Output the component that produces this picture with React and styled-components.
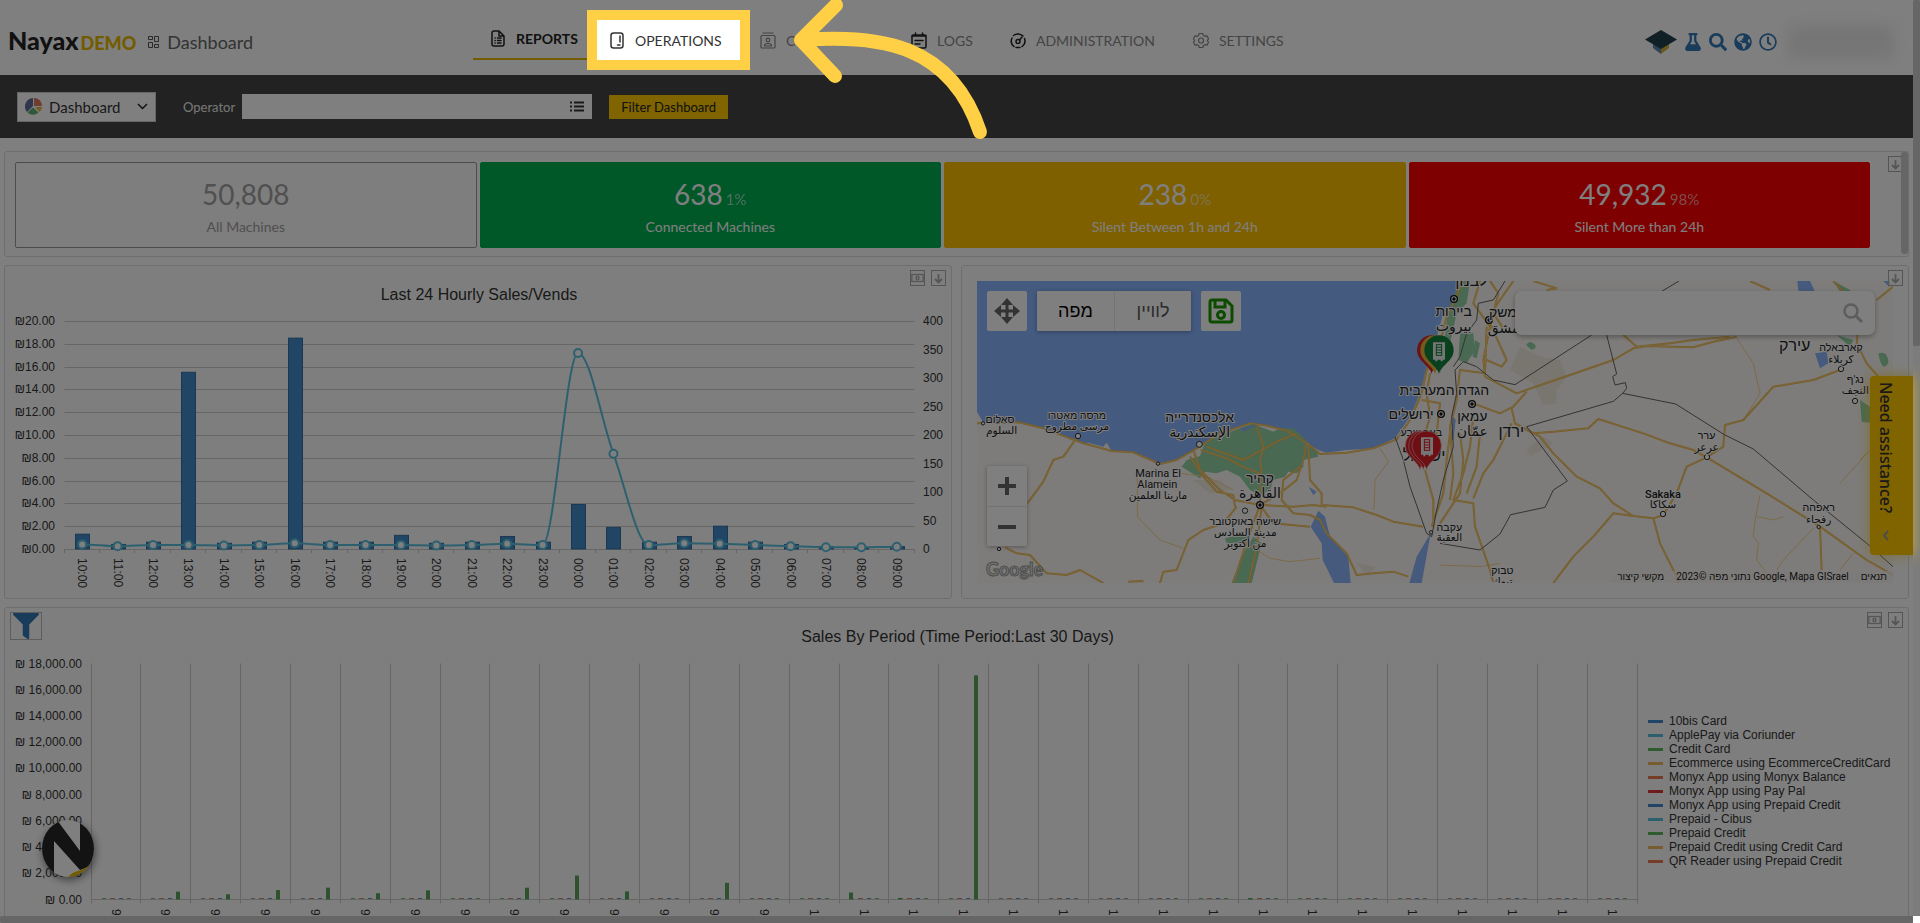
import React from 'react'
import styled, { createGlobalStyle, css } from 'styled-components'
import { FaFlask, FaSearch, FaGlobeAmericas, FaRegClock, FaFilter } from 'react-icons/fa'

const GlobalStyle = createGlobalStyle`
    * {
        box-sizing: border-box;
    }
    body {
        margin: 0;
        overflow: hidden;
        background: #fff;
        font-family: Lato, "Open Sans", sans-serif;
    }
    button, input, select {
        font-family: inherit;
    }
`

const Shell = styled.div`
    position: relative;
    display: grid;
    grid-template-columns: minmax(0, 1fr) 7px;
    grid-template-rows: minmax(0, 1fr) 7px;
    height: 100vh;
    overflow: hidden;
`

const Page = styled.div`
    overflow: hidden;
`

const Track = styled.div`
    background: #7c7c7c;
`

const Thumb = styled.div`
    height: ${({ $h }) => $h};
    width: ${({ $w }) => $w};
    background: #666;
    border-radius: 2px;
`

/* ---------- header ---------- */

const Header = styled.header`
    display: grid;
    grid-template-columns: 473px auto 1fr;
    height: 75px;
`

const Brand = styled.div`
    display: flex;
    align-items: center;
    padding: 8px 0 0 8px;
`

const Logo = styled.a`
    font-size: 25px;
    line-height: 26px;
    font-weight: 900;
    color: #222;
    text-decoration: none;
`

const LogoTag = styled.span`
    color: #e6b800;
    font-size: 18px;
    margin-left: 2px;
`

const PageTitle = styled.h1`
    display: flex;
    align-items: center;
    gap: 8px;
    margin: 0 0 0 12px;
    font-size: 18px;
    font-weight: 400;
    color: #666;
`

const Nav = styled.nav`
    display: flex;
    height: 60px;
`

const NavItem = styled.a`
    position: relative;
    display: flex;
    align-items: center;
    gap: 10px;
    padding: 20px 18px 0 15px;
    font-size: 14px;
    color: #888;
    text-decoration: none;
    white-space: nowrap;
    & > svg:first-child {
        color: ${({ $darkIcon }) => ($darkIcon ? '#222' : 'inherit')};
    }
    ${({ $active }) => $active && css`
        padding: 18px 16px 0 17px;
        border-bottom: 2px solid #e6b800;
        color: #222;
        font-weight: 700;
    `}
    ${({ $dark }) => $dark && css`
        color: #333;
    `}
`

const NavLabel = styled.span`
    min-width: ${({ $w }) => $w}px;
`

const Utilities = styled.div`
    display: flex;
    align-items: center;
    justify-content: flex-end;
    gap: 7px;
    padding: 9px 19px 0 0;
    color: #3379b7;
    font-size: 18px;
`

const Account = styled.div`
    width: 106px;
    height: 34px;
    margin-left: 4px;
    background: #eaeaea;
    filter: blur(8px);
`

/* ---------- guided tour ---------- */

const Spotlight = styled.span`
    position: absolute;
    z-index: 50;
    top: 10px;
    left: -7px;
    right: -5px;
    height: 60px;
    border: 10px solid #ffd045;
    box-shadow: 0 0 0 4000px rgba(0, 0, 0, 0.5);
    pointer-events: none;
`

const TourArrow = styled.svg`
    position: absolute;
    z-index: 51;
    top: 0;
    left: 185px;
    pointer-events: none;
`

/* ---------- filter bar ---------- */

const FilterBar = styled.form`
    display: flex;
    align-items: center;
    height: 63px;
    padding: 0 17px 0 17px;
    background: #444;
`

const ViewPicker = styled.div`
    display: flex;
    align-items: center;
    width: 139px;
    height: 30px;
    padding: 0 7px;
    border: 1px solid #ccc;
    background: #fff;
`

const ViewSelect = styled.select`
    flex: 1;
    min-width: 0;
    padding: 0 0 0 7px;
    border: 0;
    appearance: none;
    background: transparent;
    font-size: 15px;
    color: #333;
`

const OperatorLabel = styled.label`
    margin: 0 7px 0 27px;
    font-size: 13px;
    color: #eee;
`

const OperatorBox = styled.div`
    display: flex;
    align-items: center;
    width: 350px;
    height: 25px;
    padding-right: 8px;
    background: #fff;
`

const OperatorInput = styled.input`
    flex: 1;
    border: 0;
    outline: 0;
    background: transparent;
`

const FilterButton = styled.button`
    height: 24px;
    width: 119px;
    margin-left: 17px;
    padding: 0;
    border: 0;
    background: #ffc800;
    font-size: 13px;
    color: #222;
`

/* ---------- panels ---------- */

const Board = styled.main`
    display: flex;
    flex-direction: column;
    gap: 8px;
    padding: 13px 4px 0;
`

const Row = styled.div`
    display: grid;
    grid-template-columns: 1fr 1fr;
    gap: 9px;
`

const Panel = styled.section`
    position: relative;
    border: 1px solid #ddd;
    border-radius: 3px;
    background: #fdfdfd;
`

const StatPanel = styled(Panel)`
    height: 106px;
    padding: 10px 38px 9px 10px;
`

const StatGrid = styled.div`
    display: grid;
    grid-template-columns: repeat(4, 1fr);
    gap: 3px;
    height: 86px;
`

const Stat = styled.div`
    display: flex;
    flex-direction: column;
    align-items: center;
    padding-top: 13px;
    border: 1px solid ${({ $bg }) => $bg || '#999'};
    border-radius: 2px;
    background: ${({ $bg }) => $bg || 'transparent'};
    color: ${({ $bg }) => ($bg ? '#fff' : '#a0a0a0')};
`

const StatValue = styled.div`
    display: flex;
    align-items: baseline;
    gap: 3px;
    height: 36px;
    font-size: 28px;
    line-height: 36px;
`

const StatShare = styled.span`
    font-size: 15px;
    opacity: 0.6;
`

const StatName = styled.div`
    font-size: 14px;
    line-height: 30px;
`

const PanelScroll = styled.div`
    position: absolute;
    top: 0;
    right: 0;
    width: 7px;
    height: 102px;
    border-radius: 3px;
    background: #ccc;
`

const Tools = styled.div`
    position: absolute;
    top: 4px;
    right: 5px;
    display: flex;
    gap: 6px;
`

const ToolButton = styled.button`
    display: flex;
    align-items: center;
    justify-content: center;
    width: 15px;
    height: 16px;
    padding: 0;
    border: 1px solid #aaa;
    background: transparent;
    color: #aaa;
`

const FunnelButton = styled.button`
    position: absolute;
    top: 4px;
    left: 5px;
    display: flex;
    align-items: center;
    justify-content: center;
    width: 32px;
    height: 28px;
    padding: 0;
    border: 1px solid #bbb;
    background: transparent;
    color: #3379b7;
    font-size: 26px;
`

const ChartTitle = styled.h2`
    height: 46px;
    margin: 0;
    padding: 19px 0 0 2px;
    font-family: "Liberation Sans", Arial, sans-serif;
    font-size: 16px;
    line-height: 20px;
    font-weight: 400;
    text-align: center;
    color: #333;
`

const Chart = styled.svg`
    display: block;
    flex: 1;
    width: 100%;
    min-width: 0;
    height: auto;
    font-family: "Liberation Sans", Arial, sans-serif;
    font-size: 12px;
    fill: #333;
`

const ChartBody = styled.div`
    display: flex;
    align-items: flex-start;
`

const Legend = styled.ul`
    flex: none;
    width: 266px;
    margin: 0;
    padding: 60px 0 0 6px;
    list-style: none;
    font-family: "Liberation Sans", Arial, sans-serif;
    font-size: 12px;
    line-height: 14px;
    color: #333;
`

const LegendItem = styled.li`
    display: flex;
    align-items: center;
    gap: 6px;
    white-space: nowrap;
    &::before {
        content: '';
        width: 15px;
        height: 3px;
        background: ${({ $color }) => $color};
    }
`

/* ---------- map ---------- */

const MapPanel = styled(Panel)`
    padding: 15px;
`

const MapFrame = styled.div`
    position: relative;
    height: 302px;
    overflow: hidden;
    font-family: Roboto, "Liberation Sans", "DejaVu Sans", sans-serif;
`

const MapSvg = styled.svg`
    display: block;
    width: 100%;
    height: 100%;
`

const MapTop = styled.div`
    position: absolute;
    top: 10px;
    left: 10px;
    right: 18px;
    display: flex;
    align-items: flex-start;
    gap: 10px;
`

const MapButton = styled.button`
    display: flex;
    align-items: center;
    justify-content: center;
    width: ${({ $wide }) => ($wide ? 77 : 40)}px;
    height: 40px;
    padding: 0;
    border: 0;
    border-radius: 2px;
    background: #fff;
    font-size: 18px;
    color: ${({ $on }) => ($on ? '#000' : '#565656')};
`

const MapTypes = styled.div`
    display: flex;
    border-radius: 2px;
    background: #fff;
    box-shadow: 0 1px 4px rgba(0, 0, 0, 0.3);
    & > * + * {
        border-left: 1px solid #e6e6e6;
    }
`

const MapSearch = styled.label`
    display: flex;
    align-items: center;
    width: 360px;
    height: 44px;
    margin-left: auto;
    padding: 0 12px;
    border-radius: 7px;
    background: #fff;
    box-shadow: 0 2px 5px rgba(0, 0, 0, 0.3);
`

const ZoomBox = styled.div`
    position: absolute;
    left: 10px;
    top: 185px;
    border-radius: 2px;
    background: #fff;
    box-shadow: 0 1px 4px rgba(0, 0, 0, 0.3);
    & > * + * {
        border-top: 1px solid #e6e6e6;
    }
`

const MapLogo = styled.div`
    position: absolute;
    left: 9px;
    bottom: 3px;
    font-family: Lato, sans-serif;
    font-size: 18px;
    line-height: 22px;
    font-weight: 700;
    color: #eee;
    -webkit-text-stroke: 1px #999;
`

const MapCredits = styled.div`
    position: absolute;
    right: 0;
    bottom: 0;
    display: flex;
    gap: 12px;
    padding: 0 6px;
    font-size: 10px;
    line-height: 12px;
    color: #222;
    background: rgba(250, 247, 242, 0.7);
`

const CreditLink = styled.a`
    color: inherit;
    text-decoration: none;
`

const Assist = styled.button`
    position: absolute;
    top: 376px;
    right: 7px;
    display: flex;
    align-items: center;
    justify-content: space-between;
    width: 43px;
    height: 179px;
    padding: 6px 12px 14px 0;
    border: 0;
    border-radius: 4px 0 0 4px;
    background: #ffc800;
    box-shadow: 0 0 14px rgba(255, 200, 0, 0.6);
    font-family: "Noto Sans", sans-serif;
    font-size: 16px;
    line-height: 18px;
    font-weight: 500;
    color: #333;
    writing-mode: vertical-rl;
    white-space: nowrap;
`

const ChatBadge = styled.button`
    position: absolute;
    left: 42px;
    top: 820px;
    width: 54px;
    height: 58px;
    padding: 0;
    border: 0;
    background: transparent;
    filter: drop-shadow(1px 3px 4px rgba(0, 0, 0, 0.5));
`

const line = { fill: 'none', stroke: 'currentColor', strokeWidth: 1.5, strokeLinecap: 'round', strokeLinejoin: 'round' }

const icons = {
  reports: (
    <g {...line}>
      <path d="M2 3q0-2 2-2h5l5 5v8q0 2-2 2H4q-2 0-2-2zM9 1v5h5" />
      <path d="M5 8h.2M7.500 8H11M5 10.500h.2M7.500 10.500H11M5 13h.2M7.500 13H11" />
    </g>
  ),
  operations: (
    <g {...line}>
      <rect x="2" y="1" width="12" height="15" rx="2.500" />
      <path d="M11 4v6M8.500 13h2.500" />
    </g>
  ),
  customers: (
    <g {...line} strokeWidth="1.200">
      <path d="M3 1h10M2 3.500h12q1 0 1 1V15q0 1-1 1H2q-1 0-1-1V4.500q0-1 1-1z" />
      <circle cx="8" cy="8" r="1.800" />
      <path d="M4.500 14q0-2.500 3.500-2.500T11.500 14z" />
    </g>
  ),
  logs: (
    <g {...line}>
      <rect x="1" y="3" width="14" height="13" rx="1.500" />
      <path d="M4.500 1v3M11.500 1v3M1 4h14M4 8.500h8M4 12h5" />
    </g>
  ),
  admin: (
    <g {...line}>
      <path d="M4 14.500A7 7 0 0 1 2 6M3.500 3.500A7 7 0 0 1 13 4M14.500 6.500A7 7 0 0 1 12 14.500M6 15.500h4" />
      <circle cx="8" cy="9.500" r="2" />
      <path d="M9.500 8L12 5" />
    </g>
  ),
  settings: (
    <g {...line} strokeWidth="1.200">
      <path d="M6.200 1.500h3.600l.6 2 1.600.8 2-.5 1.500 3-1.200 1.700 1.200 1.700-1.500 3-2-.5-1.600.8-.6 2H6.200l-.6-2-1.600-.8-2 .5-1.500-3 1.200-1.700L.5 6.800l1.500-3 2 .5 1.600-.8z" />
      <circle cx="8" cy="8.500" r="2.500" />
    </g>
  ),
}

function NavIcon({ name }) {
  return <svg width="16" height="17" viewBox="0 0 16 17">{icons[name]}</svg>
}

function DownloadTool() {
  return (
    <ToolButton type="button" aria-label="Download">
      <svg width="9" height="11" viewBox="0 0 9 11"><path d="M4.500 1v8M1 6l3.500 3.500L8 6" fill="none" stroke="currentColor" strokeWidth="1.800" /></svg>
    </ToolButton>
  )
}

function CashTool() {
  return (
    <ToolButton type="button" aria-label="Currency">
      <svg width="15" height="10" viewBox="0 0 15 10">
        <rect x="1" y="1" width="13" height="8" fill="none" stroke="currentColor" strokeWidth="1.500" />
        <ellipse cx="7.500" cy="5" rx="2.500" ry="2.800" fill="currentColor" />
        <path d="M7.500 3.500v3" stroke="#fff" />
      </svg>
    </ToolButton>
  )
}

/* ---------- hourly chart ---------- */

const hours = ['10', '11', '12', '13', '14', '15', '16', '17', '18', '19', '20', '21', '22', '23', '00', '01', '02', '03', '04', '05', '06', '07', '08', '09']
const sales = [1.3, 0.4, 0.6, 15.5, 0.5, 0.6, 18.5, 0.6, 0.6, 1.2, 0.5, 0.6, 1.1, 0.6, 3.9, 1.9, 0.6, 1.1, 2, 0.6, 0.4, 0.2, 0.1, 0.2]
const vends = [8, 5, 7, 7, 6, 7, 10, 7, 7, 7, 6, 7, 9, 7, 344, 167, 7, 10, 9, 7, 5, 3, 3, 4]

// monotone cubic through the points, so peaks stay flat on top
function smoothPath(pts) {
  const slope = (i) => (pts[i + 1][1] - pts[i][1]) / (pts[i + 1][0] - pts[i][0])
  const tan = pts.map((p, i) => {
    if (i === 0 || i === pts.length - 1) return 0
    const a = slope(i - 1)
    const b = slope(i)
    return a * b <= 0 ? 0 : (a + b) / 2
  })
  let d = `M${pts[0][0]} ${pts[0][1]}`
  for (let i = 0; i < pts.length - 1; i++) {
    const h = (pts[i + 1][0] - pts[i][0]) / 3
    d += `C${pts[i][0] + h} ${pts[i][1] + tan[i] * h} ${pts[i + 1][0] - h} ${pts[i + 1][1] - tan[i + 1] * h} ${pts[i + 1][0]} ${pts[i + 1][1]}`
  }
  return d
}

function HourlyChart() {
  const left = 59.5
  const right = 909.5
  const base = 237
  const height = 228
  const step = (right - left) / hours.length
  const pts = vends.map((v, i) => [left + (i + 0.5) * step, base - (v / 400) * height])
  return (
    <Chart viewBox="0 0 946 285">
      {Array.from({ length: 11 }, (_, i) => {
        const y = Math.round(base - (i * height) / 10) + 0.5
        return (
          <g key={i}>
            <path d={`M${left} ${y}H${right}`} stroke="#ccc" />
            <text x="50" y={y + 3} textAnchor="end">{`₪${i * 2}.00`}</text>
          </g>
        )
      })}
      {Array.from({ length: 9 }, (_, i) => (
        <text key={i} x="918" y={base - (i * height) / 8 + 4}>{i * 50}</text>
      ))}
      {Array.from({ length: 25 }, (_, i) => (
        <path key={i} d={`M${Math.round(left + i * step) - 0.5} ${base}v4`} stroke="#ccc" />
      ))}
      {sales.map((v, i) => (
        <rect key={i} x={Math.round(pts[i][0]) - 6.5} y={base - (v / 20) * height} width="14" height={(v / 20) * height} fill="#428bca" stroke="#3570a5" />
      ))}
      <path d={smoothPath(pts)} fill="none" stroke="#5bc0de" strokeWidth="2" />
      {pts.map(([x, y]) => (
        <circle key={x} cx={x} cy={y} r="4" fill="#fff" stroke="#5bc0de" strokeWidth="2" />
      ))}
      {hours.map((h, i) => (
        <text key={h} transform={`translate(${pts[i][0] - 4} 246) rotate(90)`}>{`${h}:00`}</text>
      ))}
    </Chart>
  )
}

/* ---------- period chart ---------- */

const methods = [
  ['10bis Card', '#428bca'],
  ['ApplePay via Coriunder', '#5bc0de'],
  ['Credit Card', '#5cb85c'],
  ['Ecommerce using EcommerceCreditCard', '#f2b661'],
  ['Monyx App using Monyx Balance', '#e67d4a'],
  ['Monyx App using Pay Pal', '#da3b36'],
  ['Monyx App using Prepaid Credit', '#428bca'],
  ['Prepaid - Cibus', '#5bc0de'],
  ['Prepaid Credit', '#5cb85c'],
  ['Prepaid Credit using Credit Card', '#f2b661'],
  ['QR Reader using Prepaid Credit', '#e67d4a'],
]

const prepaid = { 1: 600, 2: 400, 3: 720, 4: 900, 5: 480, 6: 700, 8: 900, 9: 1830, 10: 620, 12: 1270, 17: 17100 }
const credit = { 15: 530, 16: 120, 23: 110 }

function PeriodChart() {
  const left = 86.5
  const right = 1632.5
  const top = 9.5
  const base = 245.5
  const step = (right - left) / 31
  const scale = (v) => (v / 18000) * (base - top)
  return (
    <Chart viewBox="0 0 1637 270">
      {Array.from({ length: 10 }, (_, i) => (
        <text key={i} x="77" y={base - scale(i * 2000) + 4} textAnchor="end">{`₪ ${(i * 2000).toLocaleString('en-US')}.00`}</text>
      ))}
      {Array.from({ length: 32 }, (_, i) => (
        <path key={i} d={`M${Math.round(left + i * step) - 0.5} ${top}V${base + 4}`} stroke="#ccc" />
      ))}
      <path d={`M${left} ${base}H${right}`} stroke="#ccc" />
      {Array.from({ length: 31 }, (_, i) => {
        const x = Math.round(left + i * step)
        return (
          <g key={i}>
            <path d={`M${x + 10} ${base - 1}h4`} stroke="#88b888" />
            <path d={`M${x + 18} ${base - 1}h5`} stroke="#c98d70" />
            <path d={`M${x + 27} ${base - 1}h4`} stroke="#6f92c0" />
            <path d={`M${x + 35} ${base - 1}h4`} stroke="#7fae7f" />
            {credit[i] && <rect x={x + 9} y={base - scale(credit[i])} width="4" height={scale(credit[i])} fill="#5aa55a" />}
            {prepaid[i] && <rect x={x + 35} y={base - scale(prepaid[i])} width="4" height={scale(prepaid[i])} fill="#5aa55a" />}
            <text transform={`translate(${x + 20} 255) rotate(90)`}>{i < 14 ? '9.' : '1'}</text>
          </g>
        )
      })}
    </Chart>
  )
}

/* ---------- map drawing ---------- */

const land = 'M51 455L70 488 130 492 175 487 250 505 320 530 370 550 385 548 430 560 440 548 455 573 520 577 560 592 600 612 650 600 700 572 740 545 780 520 870 490 920 497 980 510 1030 535 1045 552 1075 570 1100 578 1160 570 1240 565 1305 535 1350 470 1380 400 1395 340 1430 230 1450 160 1485 130 1490 63H2799V969H51z'

const greens = [
  'M735 548L790 520 820 512 880 490 900 500 940 515 960 505 1000 505 1030 530 1040 545 1070 570 1075 590 1030 600 1030 620 1010 640 985 635 975 650 940 660 930 690 900 705 870 690 840 650 800 630 770 640 735 635 720 655 665 620 680 600 720 588z',
  'M880 830L905 850 875 969H815L850 880z',
  'M795 835L860 820 865 845 800 850z',
  'M1500 63L1530 63 1520 130 1490 160 1470 250 1440 340 1455 230 1465 150z',
  'M1500 220L1540 220 1545 270 1520 310 1495 300z',
  'M1545 240L1560 250 1550 295 1538 290z',
  'M1698 255q12-18 28 0q4 14-12 14z',
  'M2620 63L2670 90 2690 130 2650 110z',
  'M2700 420L2730 440 2740 490 2705 485z',
  'M2755 280q30-10 30 30q-20 30-30-30z',
  'M2630 225L2680 240 2670 260z',
]

const waters = [
  'M840 505L900 492 880 500 850 515z',
  'M1075 752L1095 770 1110 830 1165 890 1172 969H1122L1088 900 1085 850 1052 800z',
  'M1412 820L1385 969H1348L1370 890z',
  'M1480 470L1487 480 1480 540 1472 540z',
  'M1046 680L1070 695 1060 705z',
  'M2512 63H2550L2565 95 2515 92z',
  'M2565 280L2600 275 2605 310 2580 325z',
  'M2770 63h18v18z',
]

const sands = [
  'M1680 260L1740 290 1800 300 1820 350 1790 390 1790 430 1750 435 1720 370 1650 330z',
  'M2500 110L2620 130 2600 210 2540 170z',
  'M1700 570l50 -40 30 20 -70 40z',
  'M700 660l80 0 30 30 -60 10z',
  'M1190 910l60 10 -30 25z',
]

const roads = [
  'M51 490L175 487 250 505 370 550 455 573 520 577 600 612 650 600 700 572 780 520 870 490 920 497 980 512 1045 552 1080 582 1160 578 1240 565 1310 538 1350 480 1385 400 1400 330 1440 250 1460 170 1510 63',
  'M354 528L310 590 280 600 250 665 202 730',
  'M135 862L170 880 210 885 260 940 320 945 360 930 430 969M505 965L550 963',
  'M600 969L610 935 650 930 685 840 730 810 790 790 830 740',
  'M702 575L720 630 780 690 825 720 900 735M690 590L730 650 770 695 820 705 825 740',
  'M722 570L800 595 860 625 900 640 900 735M740 560L850 600 960 540 1010 520M890 500L910 560 900 600 905 640',
  'M900 735L960 700 1010 660 1030 600 1040 550M900 735L1000 740 1060 735 1100 740',
  'M900 735L940 790 1050 800M900 735L865 830 820 969M905 740L890 860 865 969',
  'M1045 552L1050 660 1085 700 1085 735 1180 742 1250 765 1300 785 1390 800',
  'M1020 620L970 660 965 720 1000 760 1050 765 1080 780 1100 820 1160 880 1190 945 1240 940 1300 935 1345 950',
  'M1395 630L1420 720 1420 800M1415 800L1450 700 1460 600 1470 520',
  'M1400 620L1390 540 1410 470 1400 400 1410 340M1385 420L1440 430 1430 520 1400 540',
  'M1560 63L1540 130 1590 200 1570 300 1575 350M1660 63L1620 120 1600 150 1590 190',
  'M1590 63L1615 100 1600 160 1640 220M1580 200L1575 340 1500 330 1490 420 1470 500 1480 640 1470 720M1590 190L1640 300 1625 320 1580 300',
  'M1575 350L1670 400 1830 345 1960 300 2020 265 2060 258 2200 262 2260 245 2330 230',
  'M1990 225L2030 260 2130 250 2200 240 2310 230',
  'M1540 430L1620 460 1660 440 1700 395M1655 445L1665 490 1720 520 1780 515 1885 505 1915 477 2050 520 2130 550 2200 570 2240 592 2420 700 2580 800 2720 900 2799 945',
  'M1665 490L1740 530 1780 580 1850 650 1920 685 1960 730 2020 768 2080 775 2110 765 2150 700 2180 620 2240 592',
  'M2240 592L2290 560 2295 495 2350 480 2440 380 2560 360 2640 330',
  'M2020 768L1960 760 1900 830 1840 890 1780 969M2080 775L2100 850 2150 950 2155 969',
  'M1540 470L1530 560 1510 640 1480 720 1540 730 1545 800 1590 930 1600 969M1655 490L1600 600 1570 640 1540 715',
  'M1500 520L1510 600 1500 700 1440 790M1560 520L1550 620 1520 700',
  'M1720 63L1790 85 1760 90M2370 63L2430 90M2620 63L2700 150 2690 250 2720 310 2799 400M2799 80L2750 120',
  'M2580 800L2585 930',
]

const tracks = [
  'M532 640L532 770 600 840 670 865',
  'M860 850L930 895 990 905 1080 895',
  'M1260 565L1285 605 1245 660 1242 750',
  'M2330 235L2380 310 2400 400 2350 480',
  'M2400 705L2385 780 2380 830 2395 850 2390 900 2420 940M2390 770L2440 780 2470 770M2560 805L2470 900 2450 930',
  'M2700 600L2730 570 2640 670M2680 880L2640 930',
  'M1440 915L1560 920 1620 910M660 640L740 650 820 690',
]

const borders = [
  'M1305 530L1330 600 1350 680 1400 820 1415 830 1430 750 1450 660 1480 560 1475 470 1490 400 1485 330 1510 305 1550 320 1600 360 1665 374 1895 225',
  'M1635 63L1600 120 1555 130 1550 180 1520 220 1500 290 1480 320',
  'M2105 94L2157 63M1940 225L1970 342 1958 350 1965 375 1996 368 2000 385 1988 400 1960 424 1700 500 1822 663 1780 690 1755 742 1652 764 1620 822 1560 870 1440 850',
  'M1988 400L2147 432 2293 524 2380 567 2560 720 2730 858 2799 920',
]

// x, y, text, size, weight
const places = [
  [120, 488, 'סאלום', 32], [125, 522, 'السلوم', 32],
  [351, 476, 'מרסה מאטרו', 32], [351, 510, 'مرسى مطروح', 32],
  [719, 487, 'אלכסנדרייה', 42], [719, 530, 'الإسكندرية', 42],
  [594, 650, 'Marina El', 33], [592, 683, 'Alamein', 33], [594, 716, 'مارينا العلمين', 32],
  [900, 670, 'קהיר', 42], [900, 713, 'القاهرة', 42],
  [856, 794, 'שישה באוקטובר', 32], [856, 827, 'مدينة السادس', 32], [856, 860, 'من أكتوبر', 32],
  [1534, 78, 'לבנון', 48], [1481, 168, 'ביירות', 42], [1481, 213, 'بيروت', 42],
  [1640, 170, 'דמשק', 42], [1640, 218, 'دمشق', 42],
  [1453, 405, 'הגדה המערבית', 42], [1353, 476, 'ירושלים', 42],
  [1537, 484, 'עמאן', 42], [1537, 527, 'عمّان', 42], [1654, 532, 'ירדן', 48],
  [1384, 527, 'באר שבע', 32], [1392, 602, 'ישראל', 48],
  [1468, 812, 'עקבה', 32], [1468, 844, 'العقبة', 32], [1627, 943, 'טבוק', 32], [1627, 976, 'تبوك', 32],
  [2504, 272, 'עירק', 48], [2643, 273, 'קארבאלה', 32], [2643, 308, 'كربلاء', 32],
  [2686, 370, "נג'ף", 32], [2686, 402, 'النجف', 32],
  [2240, 538, 'ערר', 32], [2240, 572, 'عرعر', 32],
  [2109, 713, 'Sakaka', 33, 500], [2109, 745, 'سكاكا', 32],
  [2576, 753, 'ראפהה', 32], [2576, 788, 'رفحاء', 32],
]

const towns = [[69, 490, 5], [354, 528, 8], [718, 553, 9], [594, 611, 5], [855, 752, 8], [117, 867, 5], [2643, 327, 8], [2685, 423, 8], [2241, 591, 8], [2109, 762, 8], [2576, 801, 5], [1413, 817, 5]]
const capitals = [[900, 735], [1482, 117], [1587, 180], [1443, 462], [1536, 432]]

function Pin({ x, y, color }) {
  return (
    <g transform={`translate(${x} ${y})`}>
      <path d="M0 72C-6 45-44 34-44 0A44 44 0 0 1 44 0C44 34 6 45 0 72z" fill={color} />
    </g>
  )
}

function Vending({ x, y, color }) {
  return (
    <g transform={`translate(${x} ${y})`}>
      <path d="M-18-25H18V27H11V32H5V27H-5V32H-11V27H-18z" fill="#ececec" />
      <path d="M-9-18H9M-9-10H9M-9-2H9M-9 6H9M-9 14H9M-8-18V15M8-18V15" stroke={color} strokeWidth="3" />
    </g>
  )
}

function MapDrawing() {
  return (
    <MapSvg viewBox="51 63 2748 906" preserveAspectRatio="xMidYMid slice">
      <rect x="51" y="63" width="2748" height="906" fill="#8ab4ff" />
      <path d={land} fill="#fbf8f5" />
      {sands.map((d) => <path key={d} d={d} fill="#f3ecdf" />)}
      {greens.map((d) => <path key={d} d={d} fill="#94d2a5" />)}
      {waters.map((d) => <path key={d} d={d} fill="#8ab4f8" />)}
      <g fill="none" strokeLinejoin="round">
        {tracks.map((d) => <path key={d} d={d} stroke="#f6d591" strokeWidth="3" />)}
        {roads.map((d) => <path key={d} d={d} stroke="#eab54c" strokeWidth="6" />)}
        {roads.map((d) => <path key={d} d={d} stroke="#fbd98b" strokeWidth="2" />)}
        {borders.map((d) => <path key={d} d={d} stroke="#666" strokeWidth="3" />)}
      </g>
      {towns.map(([x, y, r]) => <circle key={x} cx={x} cy={y} r={r} fill="#fff" stroke="#333" strokeWidth="3" />)}
      {capitals.map(([x, y]) => (
        <g key={x}>
          <circle cx={x} cy={y} r="10" fill="#fff" stroke="#111" strokeWidth="4" />
          <circle cx={x} cy={y} r="5" fill="#111" />
        </g>
      ))}
      <g textAnchor="middle" fill="#222" stroke="#fff" strokeWidth="6" strokeLinejoin="round" paintOrder="stroke">
        {places.map(([x, y, text, size, weight]) => <text key={text} x={x} y={y} fontSize={size} fontWeight={weight}>{text}</text>)}
      </g>
      <Pin x={1415} y={270} color="#d9262c" />
      <Pin x={1425} y={270} color="#e8b43c" />
      <Pin x={1437} y={270} color="#12803a" />
      <Vending x={1437} y={272} color="#12803a" />
      {[1380, 1390, 1400].map((x) => (
        <g key={x} stroke="#f0c0c0" strokeWidth="2"><Pin x={x} y={557} color="#dd1f26" /></g>
      ))}
      <Vending x={1401} y={557} color="#dd1f26" />
    </MapSvg>
  )
}

function MapView() {
  return (
    <MapPanel>
      <MapFrame>
        <MapDrawing />
        <MapTop>
          <MapButton type="button" aria-label="Move">
            <svg width="26" height="26" viewBox="0 0 26 26" fill="#666">
              <path d="M13 0l6 7h-4.500v4.500H19V7l7 6-7 6v-4.500h-4.500V19H19l-6 7-6-7h4.500v-4.500H7V19l-7-6 7-6v4.500h4.500V7H7z" />
            </svg>
          </MapButton>
          <MapTypes>
            <MapButton type="button" $wide $on>מפה</MapButton>
            <MapButton type="button" $wide>לוויין</MapButton>
          </MapTypes>
          <MapButton type="button" aria-label="Save">
            <svg width="26" height="26" viewBox="0 0 26 26" fill="none" stroke="#1a9600" strokeWidth="3">
              <path d="M4 2h14l6 6v14q0 2-2 2H4q-2 0-2-2V4q0-2 2-2z" />
              <path d="M7 2v7h10V2" />
              <circle cx="13" cy="17" r="3.500" />
            </svg>
          </MapButton>
          <MapSearch>
            <OperatorInput aria-label="Search the map" />
            <svg width="20" height="20" viewBox="0 0 20 20" fill="none" stroke="#bbb" strokeWidth="2.500">
              <circle cx="8" cy="8" r="6.500" />
              <path d="M12.500 12.500L19 19" strokeWidth="3" />
            </svg>
          </MapSearch>
        </MapTop>
        <ZoomBox>
          <MapButton type="button" aria-label="Zoom in">
            <svg width="18" height="18"><path d="M9 0v18M0 9h18" stroke="#666" strokeWidth="4" /></svg>
          </MapButton>
          <MapButton type="button" aria-label="Zoom out">
            <svg width="18" height="18"><path d="M0 9h18" stroke="#666" strokeWidth="4" /></svg>
          </MapButton>
        </ZoomBox>
        <MapLogo>Google</MapLogo>
        <MapCredits>
          <CreditLink href="#keys">מקשי קיצור</CreditLink>
          <span dir="ltr">2023© נתוני מפה Google, Mapa GISrael</span>
          <CreditLink href="#terms">תנאים</CreditLink>
        </MapCredits>
      </MapFrame>
      <Tools><DownloadTool /></Tools>
    </MapPanel>
  )
}

function App() {
  return (
    <Shell>
      <GlobalStyle />
      <Page>
        <Header>
          <Brand>
            <Logo href="#home">Nayax<LogoTag>DEMO</LogoTag></Logo>
            <PageTitle>
              <svg width="11" height="12" viewBox="0 0 11 12" fill="none" stroke="#555">
                <path d="M.5.5h4v3h-4zM6.500.5h4v5h-4zM.5 6.500h4v5h-4zM6.500 8.500h4v3h-4z" />
              </svg>
              Dashboard
            </PageTitle>
          </Brand>
          <Nav>
            <NavItem href="#reports" $active><NavIcon name="reports" /><NavLabel $w={62}>REPORTS</NavLabel></NavItem>
            <NavItem href="#operations" $dark>
              <NavIcon name="operations" /><NavLabel $w={92}>OPERATIONS</NavLabel>
              <Spotlight />
              <TourArrow width="220" height="145" viewBox="780 0 220 145" fill="none" stroke="#ffd045" strokeWidth="14" strokeLinecap="round" strokeLinejoin="round">
                <path d="M837 5L802 40L836 76" />
                <path d="M804 40C880 34 952 44 981 132" />
              </TourArrow>
            </NavItem>
            <NavItem href="#customers"><NavIcon name="customers" /><NavLabel $w={92}>CUSTOMERS</NavLabel></NavItem>
            <NavItem href="#logs" $darkIcon><NavIcon name="logs" /><NavLabel $w={40}>LOGS</NavLabel></NavItem>
            <NavItem href="#administration" $darkIcon><NavIcon name="admin" /><NavLabel $w={124}>ADMINISTRATION</NavLabel></NavItem>
            <NavItem href="#settings"><NavIcon name="settings" /><NavLabel $w={70}>SETTINGS</NavLabel></NavItem>
          </Nav>
          <Utilities>
            <svg width="32" height="24" viewBox="0 0 32 24">
              <path d="M8 12v6l8 6v-8z" fill="#5d86a8" />
              <path d="M24 12v6l-8 6v-8z" fill="#d9b038" />
              <path d="M16 0l16 9.500L16 19 0 9.500z" fill="#22404f" />
            </svg>
            <FaFlask />
            <FaSearch />
            <FaGlobeAmericas />
            <FaRegClock />
            <Account />
          </Utilities>
        </Header>

        <FilterBar>
          <ViewPicker>
            <svg width="17" height="17" viewBox="0 0 17 17">
              <path d="M9 8V0a8 8 0 0 1 8 8z" fill="#e0785c" />
              <path d="M8 8V0a8.500 8.500 0 0 0-6 14z" fill="#5f6c9c" />
              <path d="M8 9.500L2.500 14.500a8 8 0 0 0 11 0z" fill="#5fae74" />
              <path d="M10 9h7a8 8 0 0 1-2.500 5z" fill="#e2b84a" />
            </svg>
            <ViewSelect aria-label="View" defaultValue="Dashboard"><option>Dashboard</option></ViewSelect>
            <svg width="11" height="7" viewBox="0 0 11 7"><path d="M1 1l4.500 4.500L10 1" fill="none" stroke="#222" strokeWidth="1.500" /></svg>
          </ViewPicker>
          <OperatorLabel htmlFor="operator">Operator</OperatorLabel>
          <OperatorBox>
            <OperatorInput id="operator" />
            <svg width="14" height="11" viewBox="0 0 14 11"><path d="M0 1.500h2M4 1.500h10M0 5.500h2M4 5.500h10M0 9.500h2M4 9.500h10" stroke="#333" strokeWidth="2" /></svg>
          </OperatorBox>
          <FilterButton type="button">Filter Dashboard</FilterButton>
        </FilterBar>

        <Board>
          <StatPanel>
            <StatGrid>
              <Stat><StatValue>50,808</StatValue><StatName>All Machines</StatName></Stat>
              <Stat $bg="#00b050"><StatValue>638<StatShare>1%</StatShare></StatValue><StatName>Connected Machines</StatName></Stat>
              <Stat $bg="#ffc000"><StatValue>238<StatShare>0%</StatShare></StatValue><StatName>Silent Between 1h and 24h</StatName></Stat>
              <Stat $bg="#ff0000"><StatValue>49,932<StatShare>98%</StatShare></StatValue><StatName>Silent More than 24h</StatName></Stat>
            </StatGrid>
            <Tools><DownloadTool /></Tools>
            <PanelScroll />
          </StatPanel>

          <Row>
            <Panel>
              <ChartTitle>Last 24 Hourly Sales/Vends</ChartTitle>
              <HourlyChart />
              <Tools><CashTool /><DownloadTool /></Tools>
            </Panel>
            <MapView />
          </Row>

          <Panel>
            <FunnelButton type="button" aria-label="Filter"><FaFilter /></FunnelButton>
            <ChartTitle>Sales By Period (Time Period:Last 30 Days)</ChartTitle>
            <ChartBody>
              <PeriodChart />
              <Legend>
                {methods.map(([name, color]) => <LegendItem key={name} $color={color}>{name}</LegendItem>)}
              </Legend>
            </ChartBody>
            <Tools><CashTool /><DownloadTool /></Tools>
          </Panel>
        </Board>
      </Page>
      <Track><Thumb $h="346px" $w="7px" /></Track>
      <Track><Thumb $h="7px" $w="auto" /></Track>
      <Assist type="button">
        <span>Need assistance?</span>
        <svg width="7" height="11" viewBox="0 0 7 11"><path d="M6 1L2 5.500 6 10" fill="none" stroke="#999" strokeWidth="2" /></svg>
      </Assist>
      <ChatBadge type="button" aria-label="Open chat">
        <svg width="54" height="58" viewBox="0 0 54 58">
          <clipPath id="disc"><ellipse cx="26" cy="28.500" rx="26" ry="28.500" /></clipPath>
          <g clipPath="url(#disc)">
            <rect width="54" height="58" fill="#fff" />
            <path d="M0 0h15l23 31V0h16v44L38 50 12 21V58H0z" fill="#262626" />
            <path d="M26 58q2-5 10-7t16-10v17z" fill="#e6b800" />
          </g>
        </svg>
      </ChatBadge>
    </Shell>
  )
}

export default App
